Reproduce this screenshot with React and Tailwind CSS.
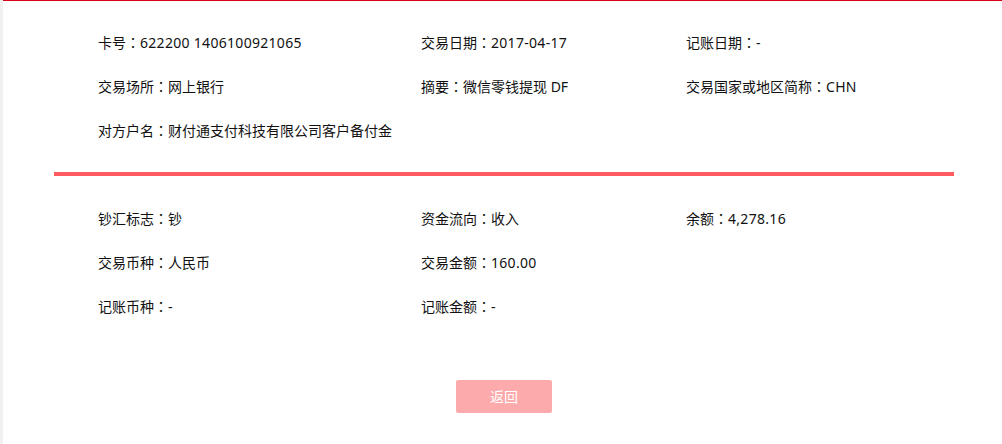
import React from "react";

const font = { fontFamily: '"Noto Sans", "Noto Sans CJK SC", sans-serif' };

function Item({ label, value }) {
  if (!label) return null;
  const latin = /^[0-9A-Za-z ,.\-]+$/.test(value);
  return (
    <span>
      {label}
      <span style={{ fontFamily: '"Noto Sans CJK JP", sans-serif' }}>：</span>
      <span className={latin ? "tracking-[0.3px]" : ""}>{value}</span>
    </span>
  );
}

function Row({ items }) {
  return (
    <div className="flex h-[44px] items-center">
      <div className="w-[323px] shrink-0"><Item {...(items[0] || {})} /></div>
      <div className="w-[265px] shrink-0"><Item {...(items[1] || {})} /></div>
      <div className="flex-1"><Item {...(items[2] || {})} /></div>
    </div>
  );
}

export default function App() {
  return (
    <div className="flex h-[444px] w-[1002px] bg-[#f0f0f0]" style={font}>
      <div className="ml-[3px] flex-1 border-t border-[#d9001b] bg-white">
        <div className="ml-[51px] mr-[48px] text-[14px] text-[#111]">
          <div className="pl-[44px] pt-[19px] pb-[20px]">
            <Row items={[{ label: "卡号", value: "622200 1406100921065" }, { label: "交易日期", value: "2017-04-17" }, { label: "记账日期", value: "-" }]} />
            <Row items={[{ label: "交易场所", value: "网上银行" }, { label: "摘要", value: "微信零钱提现 DF" }, { label: "交易国家或地区简称", value: "CHN" }]} />
            <Row items={[{ label: "对方户名", value: "财付通支付科技有限公司客户备付金" }]} />
          </div>
          <div className="h-[4px] bg-[#ff5a5f]" />
          <div className="pl-[44px] pt-[20px]">
            <Row items={[{ label: "钞汇标志", value: "钞" }, { label: "资金流向", value: "收入" }, { label: "余额", value: "4,278.16" }]} />
            <Row items={[{ label: "交易币种", value: "人民币" }, { label: "交易金额", value: "160.00" }]} />
            <Row items={[{ label: "记账币种", value: "-" }, { label: "记账金额", value: "-" }]} />
          </div>
          <div className="flex justify-center pt-[52px]">
            <button className="h-[33px] w-[96px] rounded-[2px] bg-[#fcaaab] text-[14px] text-white">
              返回
            </button>
          </div>
        </div>
      </div>
    </div>
  );
}
